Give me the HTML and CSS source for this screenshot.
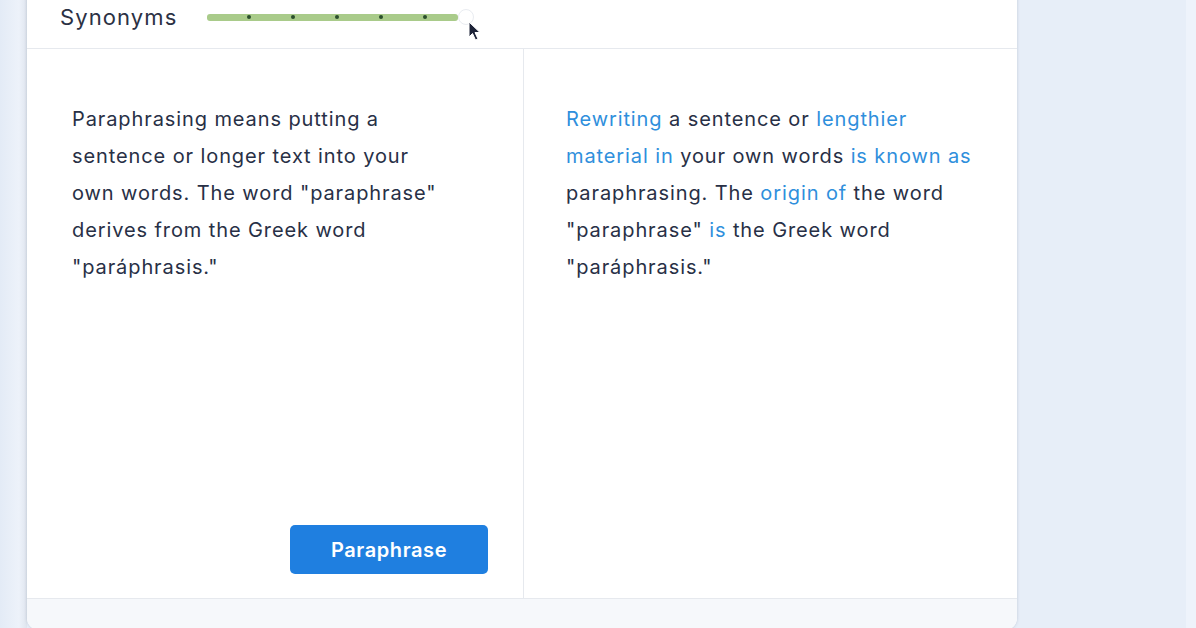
FILE: index.html
```html
<!DOCTYPE html>
<html lang="en">
<head>
    <meta charset="UTF-8">
    <meta name="viewport" content="width=device-width, initial-scale=1.0">
    <title>Paraphraser</title>
    <link rel="stylesheet" href="styles.css">
</head>
<body>
    <div class="page">
        <div class="gutter"></div>
        <div class="tool">
            <!-- Mode bar with the synonyms slider -->
            <div class="tool-header">
                <span class="label">Synonyms</span>
                <div class="slider">
                    <div class="track">
                        <span class="tick"></span>
                        <span class="tick"></span>
                        <span class="tick"></span>
                        <span class="tick"></span>
                        <span class="tick"></span>
                    </div>
                    <span class="thumb"></span>
                    <svg class="cursor" width="16" height="20" viewBox="0 0 16 20">
                        <path d="M2 1 L2 16 L5.5 12.5 L8.5 19 L11 18 L8 11.5 L13 11.5 Z" fill="#1c2237" stroke="#ffffff" stroke-width="1"/>
                    </svg>
                </div>
            </div>

            <div class="tool-body">
                <div class="pane input-pane">
                    <p class="text">Paraphrasing means putting a sentence or longer text into your own words. The word "paraphrase" derives from the Greek word "paráphrasis."</p>
                    <div class="actions">
                        <button class="btn-primary">Paraphrase</button>
                    </div>
                </div>
                <div class="pane output-pane">
                    <p class="text"><span class="changed">Rewriting</span> a sentence or <span class="changed">lengthier material in</span> your own words <span class="changed">is known as</span> paraphrasing. The <span class="changed">origin of</span> the word "paraphrase" <span class="changed">is</span> the Greek word "paráphrasis."</p>
                </div>
            </div>

            <div class="tool-footer"></div>
        </div>
        <div class="side"></div>
    </div>
</body>
</html>
```

FILE: styles.css
```css
* {
    margin: 0;
    padding: 0;
    box-sizing: border-box;
}

body {
    background-color: #e7eef8;
    font-family: Inter, "Noto Sans", sans-serif;
    color: #283046;
    overflow: hidden;
}

.page {
    display: flex;
    height: 628px;
}

.gutter {
    width: 27px;
    flex-shrink: 0;
    background: linear-gradient(to right, #e3ebf6, #edf2fa 70%, #dfe5ee);
}

.side {
    flex: 1;
    border-right: 10px solid #eef3fb;
}

/* Main card */
.tool {
    width: 990px;
    flex-shrink: 0;
    margin-top: -14px;
    height: 644px;
    background-color: #ffffff;
    border-radius: 12px;
    box-shadow: 0 0 3px rgba(60, 80, 110, 0.25);
    display: flex;
    flex-direction: column;
    overflow: hidden;
}

.tool-header {
    height: 63px;
    flex-shrink: 0;
    padding-left: 33px;
    display: flex;
    align-items: center;
    border-bottom: 1px solid #e6e9ee;
}

.label {
    font-size: 22px;
    letter-spacing: 1.1px;
    color: #2b3144;
    width: 147px;
}

.slider {
    position: relative;
    display: flex;
    align-items: center;
    height: 20px;
}

.track {
    width: 251px;
    height: 7px;
    background-color: #a9cb8a;
    border-radius: 3px;
    display: flex;
    align-items: center;
    gap: 40px;
    padding-left: 40px;
}

.tick {
    width: 4px;
    height: 4px;
    border-radius: 50%;
    background-color: #2a4f2c;
}

.thumb {
    width: 16px;
    height: 16px;
    border-radius: 50%;
    background-color: #ffffff;
    border: 1px solid #e9ecf1;
}

.cursor {
    position: absolute;
    left: 260px;
    top: 14px;
}

.tool-body {
    flex: 1;
    display: flex;
}

.pane {
    display: flex;
    flex-direction: column;
}

.input-pane {
    flex: 0 0 497px;
    padding: 52px 35px 24px 45px;
    border-right: 1px solid #e6e9ee;
}

.output-pane {
    flex: 1;
    padding: 52px 30px 24px 42px;
}

.text {
    font-size: 20px;
    line-height: 37px;
    letter-spacing: 0.9px;
    max-width: 375px;
}

.output-pane .text {
    max-width: 418px;
}

.changed {
    color: #2f8fdc;
}

.actions {
    margin-top: auto;
    display: flex;
    justify-content: flex-end;
}

.btn-primary {
    width: 198px;
    height: 49px;
    background-color: #1f7fe0;
    color: #ffffff;
    border: none;
    border-radius: 5px;
    font-family: Inter, "Noto Sans", sans-serif;
    font-size: 20px;
    letter-spacing: 0.6px;
    font-weight: 600;
    cursor: pointer;
}

.tool-footer {
    height: 32px;
    flex-shrink: 0;
    background-color: #f6f8fb;
    border-top: 1px solid #e6e9ee;
}
```
